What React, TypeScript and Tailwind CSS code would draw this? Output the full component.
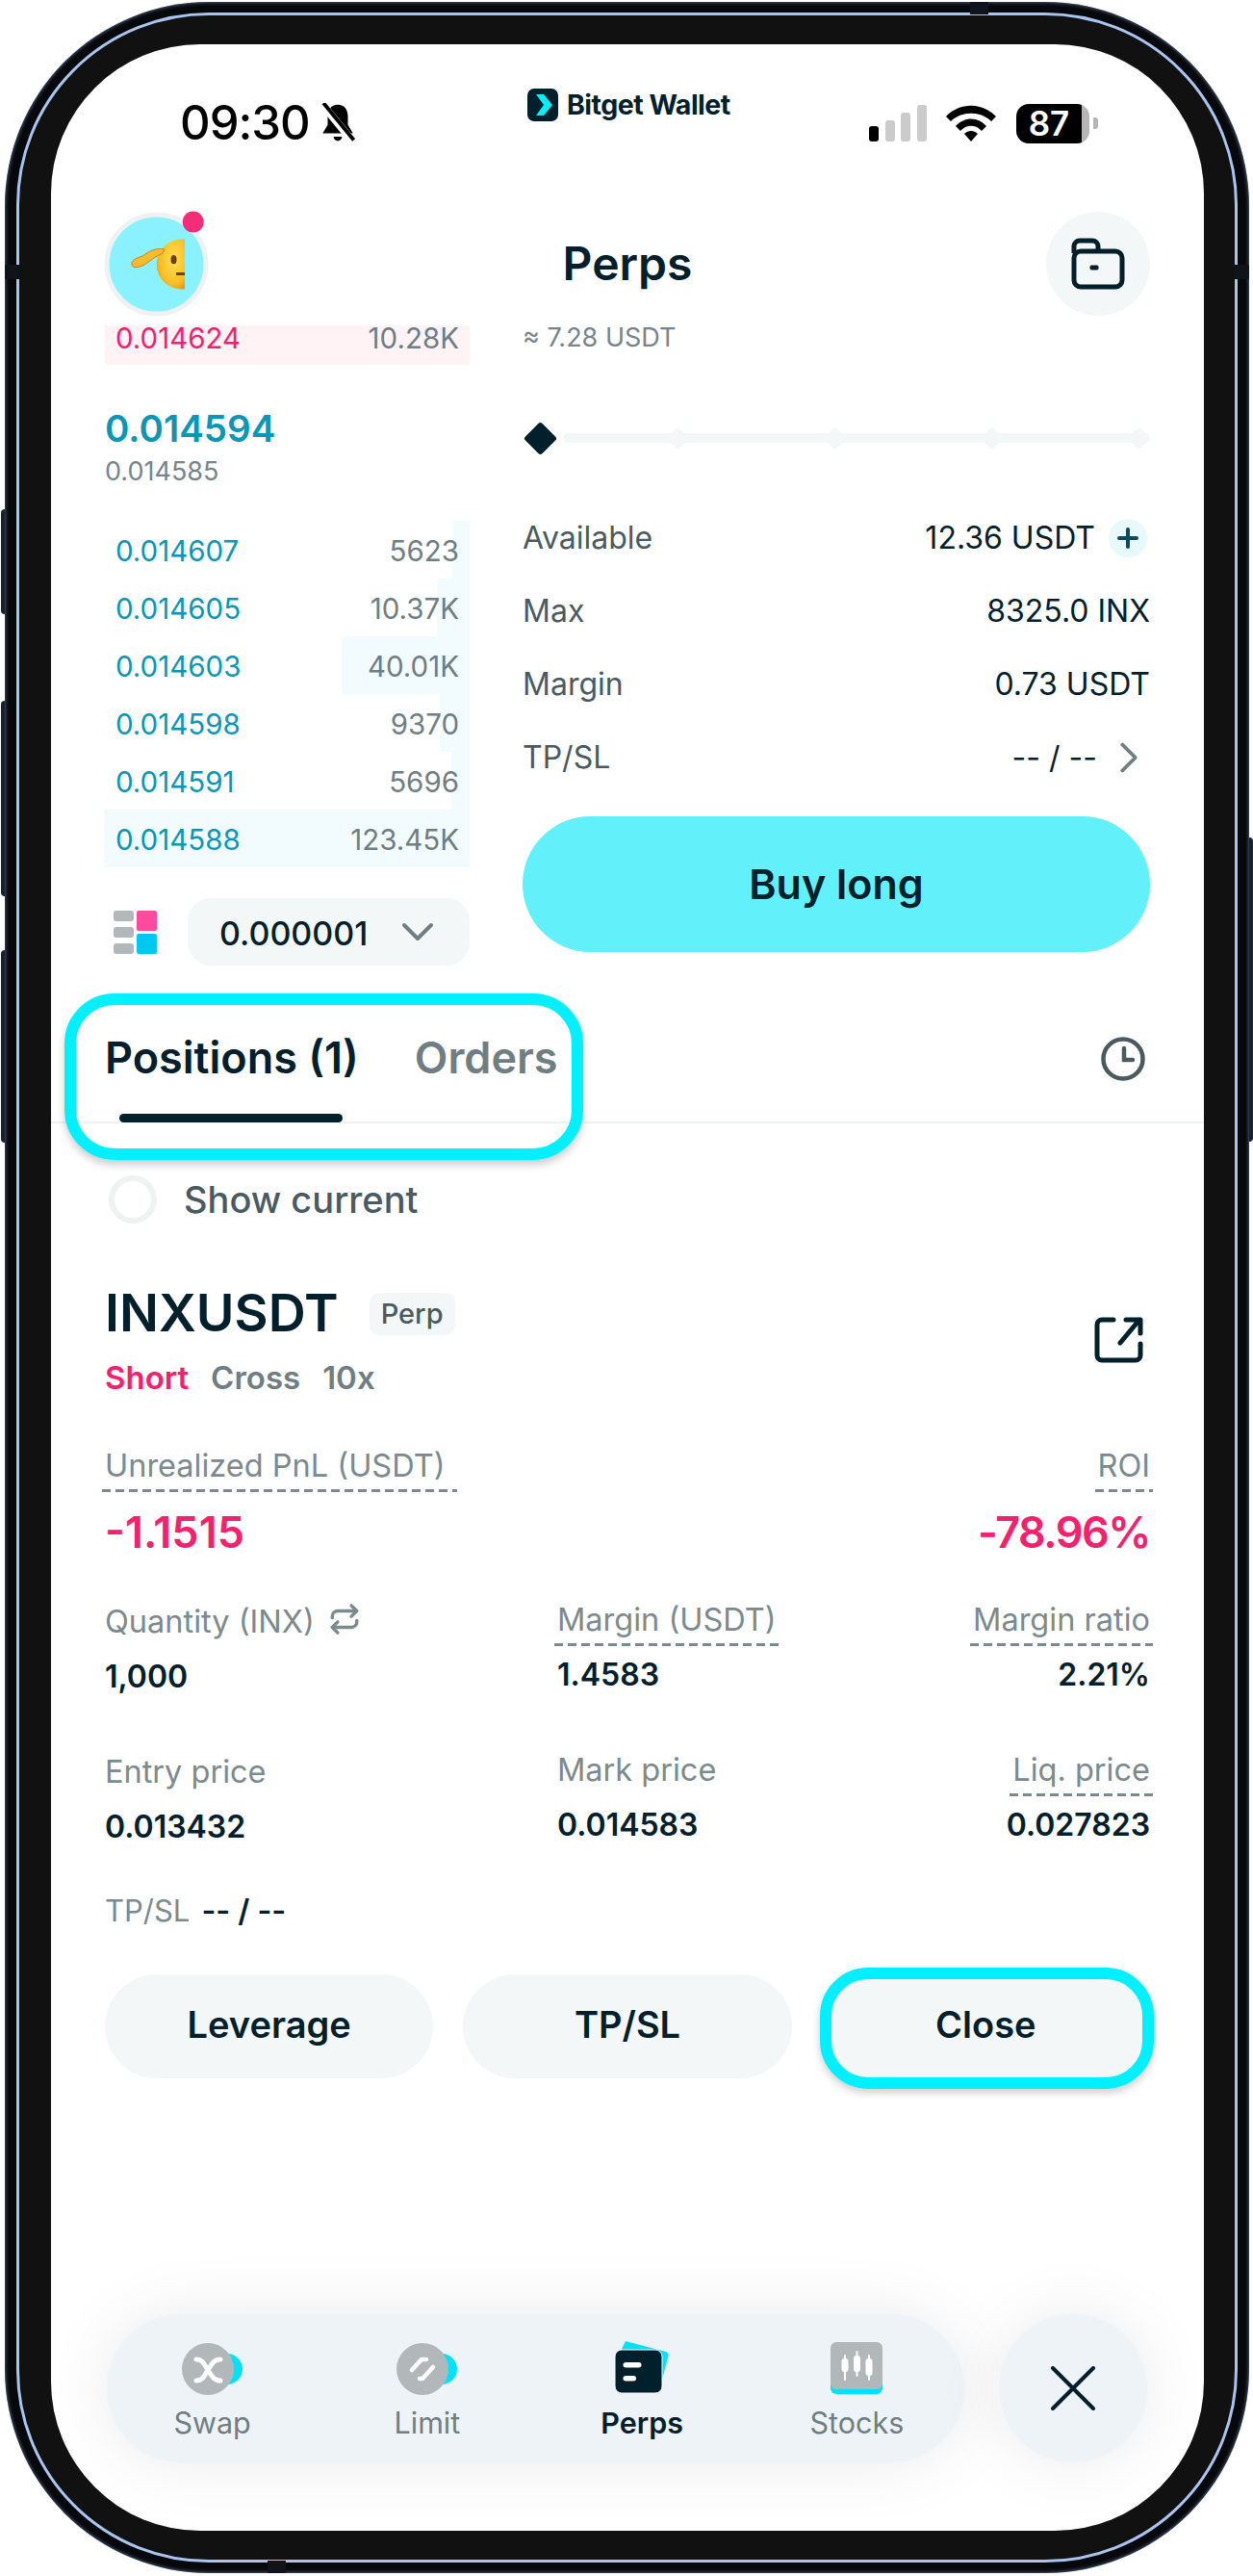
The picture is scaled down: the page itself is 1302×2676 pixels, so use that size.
import React from 'react';
import { ChevronDown, ChevronRight, Repeat } from 'lucide-react';

const asks = [
  { price: '0.014607', size: '5623', bar: 18 },
  { price: '0.014605', size: '10.37K', bar: 34 },
  { price: '0.014603', size: '40.01K', bar: 133 },
  { price: '0.014598', size: '9370', bar: 31 },
  { price: '0.014591', size: '5696', bar: 19 },
  { price: '0.014588', size: '123.45K', bar: 380 },
];

const Dash: React.FC = () => (
  <div className="-mx-[3px] mt-[4px] h-[3px] bg-[repeating-linear-gradient(90deg,#7c8a8e_0,#7c8a8e_9px,transparent_9px,transparent_14px)]" />
);

const Stat: React.FC<{ label: string; value: string; dashed?: boolean; right?: boolean; icon?: boolean; push?: boolean }> = ({
  label,
  value,
  dashed,
  right,
  icon,
  push,
}) => (
  <div className={`flex flex-col ${right ? 'items-end' : 'items-start'} ${push ? 'pt-[2px]' : ''}`}>
    <div className="inline-flex flex-col">
      <div className="flex items-center gap-[14px] text-[32.5px] leading-[40px] text-[#7c8a8e]">
        {label}
        {icon && <Repeat size={34} strokeWidth={2.4} className="-mt-[6px]" />}
      </div>
      {dashed ? <Dash /> : <div className="mt-[4px] h-[3px]" />}
    </div>
    <div className="mt-[10px] text-[32px] font-semibold leading-[40px] text-[#02202b]">{value}</div>
  </div>
);

const Avatar: React.FC = () => (
  <svg width="109" height="109" viewBox="8 9 109 109" className="overflow-visible">
    <defs>
      <radialGradient id="face" cx="0.6" cy="0.4" r="0.7">
        <stop offset="0" stopColor="#ffdf4f" />
        <stop offset="0.7" stopColor="#fbbf24" />
        <stop offset="1" stopColor="#ee8f10" />
      </radialGradient>
    </defs>
    <circle cx="62.5" cy="63.5" r="51.5" fill="#8af2ff" stroke="#f0f1f3" strokeWidth="5" />
    <path d="M92 37.7A26 26 0 1 0 92 89.3Z" fill="url(#face)" />
    <path
      d="M71 48C62 46 55 50 48 55C41 57 36 60 37 64C38 68 44 67 50 64C56 60 62 55 69 52Z"
      fill="#f7bb30"
      stroke="#cf8414"
      strokeWidth="1"
    />
    <ellipse cx="80.5" cy="58.7" rx="3" ry="4.6" fill="#6b3e0a" />
    <rect x="83" y="72" width="9" height="3" fill="#6b3e0a" />
    <circle cx="100.7" cy="19.5" r="11" fill="#f62d76" />
  </svg>
);

const SwapIcon: React.FC = () => (
  <svg width="64" height="58" viewBox="0 0 64 58">
    <circle cx="47" cy="29" r="16" fill="#00e0ff" />
    <circle cx="27" cy="29" r="27" fill="#b2b8ba" />
    <path
      d="M15 19C22 19 23 24 27 30C31 36 33 41 40 41M40 19C33 19 31 24 27 30C23 36 22 41 15 41"
      fill="none"
      stroke="#fff"
      strokeWidth="5"
      strokeLinecap="round"
    />
  </svg>
);

const LimitIcon: React.FC = () => (
  <svg width="64" height="58" viewBox="0 0 64 58">
    <circle cx="47" cy="29" r="16" fill="#00e0ff" />
    <circle cx="27" cy="29" r="27" fill="#b2b8ba" />
    <path d="M16 30L26 19H31M24 39H27L38 27" fill="none" stroke="#fff" strokeWidth="4.5" strokeLinecap="round" strokeLinejoin="round" />
  </svg>
);

const PerpsIcon: React.FC = () => (
  <svg width="58" height="56" viewBox="0 0 58 56">
    <path d="M12 0L54 11Q57 12 56.5 15L50 40L8 8Z" fill="#00e0ff" />
    <rect x="1" y="9" width="49" height="45" rx="7" fill="#02202b" stroke="#fff" strokeWidth="1" />
    <rect x="9.5" y="22" width="19" height="5.5" rx="2.7" fill="#fff" />
    <rect x="9.5" y="36" width="13.5" height="5.5" rx="2.7" fill="#fff" />
  </svg>
);

const StocksIcon: React.FC = () => (
  <svg width="54" height="55" viewBox="0 0 54 55">
    <rect x="0" y="26" width="54" height="29" rx="6" fill="#00e0ff" />
    <rect x="0" y="1" width="54" height="49" rx="6" fill="#b2b8ba" />
    <g fill="#fff">
      <rect x="11.5" y="18" width="7" height="14" rx="3" />
      <rect x="14" y="14" width="2" height="27" rx="1" />
      <rect x="24" y="15" width="7" height="17" rx="3" />
      <rect x="26.5" y="10" width="2" height="27" rx="1" />
      <rect x="36.5" y="18" width="7" height="18" rx="3" />
      <rect x="39" y="14" width="2" height="27" rx="1" />
    </g>
  </svg>
);

const App: React.FC = () => {
  return (
    <div className="relative h-[2676px] w-[1302px] bg-white [font-family:Inter,sans-serif]">
      {/* side buttons */}
      <div className="absolute left-[1px] top-[529px] h-[109px] w-[6px] rounded-l-[4px] bg-[#1a2230]" />
      <div className="absolute left-[1px] top-[728px] h-[203px] w-[6px] rounded-l-[4px] bg-[#1a2230]" />
      <div className="absolute left-[1px] top-[987px] h-[200px] w-[6px] rounded-l-[4px] bg-[#1a2230]" />
      <div className="absolute right-0 top-[870px] h-[316px] w-[6px] rounded-r-[4px] bg-[#1a2230]" />

      <div className="absolute left-[5px] top-[2px] h-[2671px] w-[1293px] rounded-[212px] bg-[#06080c] px-[12px] py-[11px] shadow-[inset_0_0_4px_rgba(150,180,225,0.7)]">
        <div className="h-full rounded-[200px] border-[3px] border-[#a9c4ee] bg-[#111111] pb-[30px] pl-[33px] pr-[32px] pt-[30px]">
          <div className="flex h-full flex-col overflow-hidden rounded-[155px] bg-white">
            {/* status bar */}
            <div className="flex h-[174px] shrink-0 pl-[134px] pr-[110px]">
              <div className="mt-[58px] flex h-[48px] w-[360px] items-center gap-[8px]">
                <span className="text-[49px] font-medium leading-[48px] tracking-[-1px] text-black">09:30</span>
                <svg width="42" height="42" viewBox="0 0 24 24">
                  <path d="M12 1C8 1 6 4 6 8V13L3 18H21L18 13V8C18 4 16 1 12 1Z" fill="#000" />
                  <path d="M9.5 20A2.5 2.5 0 0 0 14.5 20Z" fill="#000" />
                  <path d="M3 1L21 23" stroke="#fff" strokeWidth="4.5" />
                  <path d="M3.5 0L21.5 22" stroke="#000" strokeWidth="2.2" />
                </svg>
              </div>
              <div className="mt-[45px] flex h-[36px] items-center gap-[8px]">
                <svg width="34" height="34" viewBox="0 0 32 34">
                  <rect width="32" height="34" rx="7" fill="#02202b" />
                  <path d="M9 6H17L26 17L17 28H9L17 17Z" fill="#00f0ff" />
                </svg>
                <span className="text-[28.5px] font-bold tracking-[-0.5px] text-[#02202b]">Bitget Wallet</span>
              </div>
              <div className="ml-auto mt-[58px] flex h-[48px] items-center">
                <svg width="60" height="38" viewBox="0 0 60 38">
                  <rect x="0" y="22" width="10" height="16" rx="3" fill="#000" />
                  <rect x="17" y="16" width="10" height="22" rx="3" fill="#cbcbcb" />
                  <rect x="33" y="8" width="10" height="30" rx="3" fill="#cbcbcb" />
                  <rect x="50" y="0" width="10" height="38" rx="3" fill="#cbcbcb" />
                </svg>
                <svg width="52" height="38" viewBox="0 0 52 38" className="ml-[20px]">
                  <path d="M0 12C14 -3 38 -3 52 12L47 17C36 6 16 6 5 17Z" fill="#000" />
                  <path d="M10 22C19 12 33 12 42 22L37 27C31 20 21 20 15 27Z" fill="#000" />
                  <path d="M19 30C23 26 29 26 33 30L26 38Z" fill="#000" />
                </svg>
                <div className="ml-[21px] flex h-[41px] w-[76px] overflow-hidden rounded-[13px]">
                  <div className="flex w-[68px] items-center justify-center bg-black text-[35px] font-semibold leading-none text-white">87</div>
                  <div className="w-[8px] bg-[#b5b5b5]" />
                </div>
                <div className="ml-[4px] h-[12px] w-[5px] rounded-r-[3px] bg-[#b5b5b5]" />
              </div>
            </div>

            {/* header */}
            <div className="flex h-[108px] shrink-0 items-center justify-between pl-[55px] pr-[56px]">
              <Avatar />
              <span className="text-[48px] font-semibold text-[#02202b]">Perps</span>
              <div className="flex h-[108px] w-[108px] items-center justify-center rounded-full bg-[#f4f7f8]">
                <svg width="56" height="54" viewBox="0 0 56 54" fill="none" stroke="#02202b" strokeWidth="5">
                  <rect x="3" y="14" width="50" height="37" rx="7" />
                  <path d="M3 16V9A6 6 0 0 1 9 3H22A6 6 0 0 1 28 9V14" />
                  <rect x="20" y="29" width="8" height="4" rx="1" fill="#02202b" strokeWidth="1" />
                </svg>
              </div>
            </div>

            {/* order book and order form */}
            <div className="mt-[10px] flex h-[664px] shrink-0 gap-[55px] pl-[56px]">
              <div className="w-[379px] shrink-0">
                <div className="flex h-[41px] justify-between bg-[#fff3f6] px-[11px] text-[29.5px] leading-[26px]">
                  <span className="text-[#f5206e]">0.014624</span>
                  <span className="text-[#6f7e82]">10.28K</span>
                </div>
                <div className="mt-[44px] text-[38.5px] font-semibold leading-[44px] text-[#0a96b4]">0.014594</div>
                <div className="mt-[6px] text-[27px] leading-[34px] text-[#77848a]">0.014585</div>
                <div className="mt-[34px]">
                  {asks.map((row) => (
                    <div key={row.price} className="relative flex h-[60px] items-center justify-between px-[11px] pt-[3px] text-[29.5px]">
                      <div className="absolute bottom-0 right-0 top-0 bg-[#f2fbfe]" style={{ width: row.bar }} />
                      <span className="relative text-[#0a96b4]">{row.price}</span>
                      <span className="relative text-[#6f7e82]">{row.size}</span>
                    </div>
                  ))}
                </div>
                <div className="mt-[32px] flex h-[70px] items-center justify-between pl-[9px]">
                  <svg width="45" height="45" viewBox="0 0 45 45">
                    <rect x="0" y="0" width="21" height="11" rx="3" fill="#b2b8ba" />
                    <rect x="0" y="17" width="21" height="11" rx="3" fill="#b2b8ba" />
                    <rect x="0" y="34" width="21" height="11" rx="3" fill="#b2b8ba" />
                    <rect x="24" y="0" width="21" height="21" rx="2" fill="#ff4b9d" />
                    <rect x="24" y="24" width="21" height="21" rx="2" fill="#00c8f0" />
                  </svg>
                  <div className="flex h-[70px] w-[293px] items-center rounded-[24px] bg-[#f4f7f8] pl-[33px]">
                    <span className="pt-[3px] text-[34px] font-medium text-[#02202b]">0.000001</span>
                    <ChevronDown size={56} strokeWidth={1.7} className="ml-[24px] text-[#6f7e82]" />
                  </div>
                </div>
              </div>

              <div className="w-[652px] shrink-0">
                <div className="text-[27px] leading-[26px] text-[#77848a]">≈ 7.28 USDT</div>
                <div className="mt-[71px] flex h-[40px] items-center">
                  <div className="ml-[6px] mr-[11px] h-[25px] w-[25px] shrink-0 rotate-45 rounded-[3px] bg-[#02202b]" />
                  <div className="relative flex h-[24px] flex-1 items-center">
                    <div className="absolute inset-x-0 h-[10px] rounded-full bg-[#f3f7f8]" />
                    <div className="relative ml-[111px] flex items-center gap-[146px]">
                      <div className="h-[17px] w-[17px] shrink-0 rotate-45 rounded-[3px] bg-[#f3f7f8]" />
                      <div className="h-[17px] w-[17px] shrink-0 rotate-45 rounded-[3px] bg-[#f3f7f8]" />
                      <div className="h-[17px] w-[17px] shrink-0 rotate-45 rounded-[3px] bg-[#f3f7f8]" />
                      <div className="-ml-[10px] h-[17px] w-[17px] shrink-0 rotate-45 rounded-[3px] bg-[#f3f7f8]" />
                    </div>
                  </div>
                </div>
                <div className="mt-[64px] flex flex-col gap-[36px] text-[32px] leading-[40px]">
                  <div className="flex items-center justify-between text-[#02202b]">
                    <span className="text-[#4a5a5f]">Available</span>
                    <div className="flex items-center gap-[14px] pr-[3px]">
                      <span>12.36 USDT</span>
                      <div className="flex h-[40px] w-[40px] items-center justify-center rounded-full bg-[#e8f9fc]">
                        <svg width="22" height="22" viewBox="0 0 22 22" stroke="#0d4a5c" strokeWidth="4" strokeLinecap="round">
                          <path d="M11 2V20M2 11H20" />
                        </svg>
                      </div>
                    </div>
                  </div>
                  <div className="flex items-center justify-between text-[#02202b]">
                    <span className="text-[#4a5a5f]">Max</span>
                    <span>8325.0 INX</span>
                  </div>
                  <div className="flex items-center justify-between text-[#02202b]">
                    <span className="text-[#4a5a5f]">Margin</span>
                    <span>0.73 USDT</span>
                  </div>
                  <div className="flex items-center justify-between text-[#02202b]">
                    <span className="text-[#4a5a5f]">TP/SL</span>
                    <div className="flex h-[40px] items-center">
                      <span>-- / --</span>
                      <ChevronRight size={54} strokeWidth={1.7} className="-mr-[5px] ml-[6px] text-[#6f7e82]" />
                    </div>
                  </div>
                </div>
                <button className="mt-[41px] flex h-[141px] w-full items-center justify-center rounded-full bg-[#62f0fa] text-[43px] font-semibold text-[#02202b]">
                  Buy long
                </button>
              </div>
            </div>

            {/* tabs */}
            <div className="relative flex h-[165px] shrink-0 items-start justify-between border-b-2 border-[#eef2f3] pl-[56px] pr-[61px] pt-[69px]">
              <div className="flex gap-[58px] text-[45px] font-semibold leading-[56px]">
                <div className="flex flex-col">
                  <span className="text-[#02202b]">Positions (1)</span>
                  <div className="ml-[15px] mt-[30px] h-[9px] w-[232px] rounded-full bg-[#02202b]" />
                </div>
                <span className="text-[#6f7e82]">Orders</span>
              </div>
              <svg width="46" height="46" viewBox="0 0 46 46" fill="none" stroke="#4a5a5f" strokeWidth="4.5" className="mt-[6px]">
                <circle cx="23" cy="23" r="20.5" />
                <path d="M24 12V24H33" strokeLinecap="round" />
              </svg>
              <div className="absolute left-[14px] top-[30px] h-[173px] w-[539px] rounded-[52px] border-[12px] border-[#00f0ff] shadow-[0_5px_8px_rgba(0,0,0,0.2)]" />
            </div>

            {/* show current */}
            <div className="mt-[53px] flex h-[52px] shrink-0 items-center gap-[28px] pl-[60px]">
              <div className="h-[50px] w-[50px] rounded-full border-[6px] border-[#f0f1f1]" />
              <span className="text-[38px] font-medium text-[#4a5a5f]">Show current</span>
            </div>

            {/* position card */}
            <div className="shrink-0 px-[56px]">
              <div className="mt-[60px] flex items-center justify-between">
                <div>
                  <div className="flex h-[64px] items-center gap-[32px]">
                    <span className="text-[54px] font-semibold leading-[64px] text-[#02202b]">INXUSDT</span>
                    <span className="mt-[2px] rounded-[10px] bg-[#f4f7f8] px-[12px] py-[2px] text-[29px] font-medium leading-[40px] text-[#4a5a5f]">Perp</span>
                  </div>
                  <div className="mt-[15px] flex h-[40px] items-center gap-[23px] text-[33px] font-semibold leading-[40px] text-[#6f7e82]">
                    <span className="text-[#f5206e]">Short</span>
                    <span>Cross</span>
                    <span>10x</span>
                  </div>
                </div>
                <svg width="52" height="48" viewBox="0 0 52 48" fill="none" stroke="#02202b" strokeWidth="5" strokeLinecap="round" strokeLinejoin="round" className="mr-[6px]">
                  <path d="M20 3H8A5 5 0 0 0 3 8V40A5 5 0 0 0 8 45H43A5 5 0 0 0 48 40V28" />
                  <path d="M27 27L47 3M33 3H48V17" />
                </svg>
              </div>

              <div className="mt-[52px] flex items-start justify-between">
                <div>
                  <div className="inline-flex flex-col">
                    <div className="pr-[9px] text-[32.5px] leading-[40px] text-[#7c8a8e]">Unrealized PnL (USDT)</div>
                    <Dash />
                  </div>
                  <div className="mt-[16px] text-[45px] font-semibold leading-[52px] text-[#f5206e]">-1.1515</div>
                </div>
                <div className="flex flex-col items-end">
                  <div className="inline-flex flex-col">
                    <div className="text-[32.5px] leading-[40px] text-[#7c8a8e]">ROI</div>
                    <Dash />
                  </div>
                  <div className="mt-[16px] text-[45px] font-semibold leading-[52px] tracking-[-1.5px] text-[#f5206e]">-78.96%</div>
                </div>
              </div>

              <div className="mt-[45px] grid grid-cols-[470px_1fr_1fr] gap-y-[57px]">
                <Stat label="Quantity (INX)" value="1,000" icon push />
                <Stat label="Margin (USDT)" value="1.4583" dashed />
                <Stat label="Margin ratio" value="2.21%" dashed right />
                <Stat label="Entry price" value="0.013432" push />
                <Stat label="Mark price" value="0.014583" />
                <Stat label="Liq. price" value="0.027823" dashed right />
              </div>

              <div className="mt-[47px] flex h-[40px] items-center gap-[12px] leading-[40px]">
                <span className="text-[31px] text-[#7c8a8e]">TP/SL</span>
                <span className="text-[32px] font-semibold text-[#02202b]">-- / --</span>
              </div>

              <div className="mt-[46px] grid grid-cols-3 gap-[31px]">
                <button className="h-[108px] rounded-full bg-[#f4f7f8] pb-[3px] text-[38px] font-semibold text-[#02202b]">Leverage</button>
                <button className="h-[108px] rounded-full bg-[#f4f7f8] pb-[3px] text-[38px] font-semibold text-[#02202b]">TP/SL</button>
                <div className="relative">
                  <button className="h-[108px] w-full rounded-full bg-[#f4f7f8] pb-[3px] text-[38px] font-semibold text-[#02202b]">Close</button>
                  <div className="absolute -bottom-[11px] -left-[2px] -right-[4px] -top-[7px] rounded-[50px] border-[12px] border-[#00f0ff] shadow-[0_4px_8px_rgba(0,0,0,0.2)]" />
                </div>
              </div>
            </div>

            {/* bottom nav */}
            <div className="mt-[243px] flex shrink-0 gap-[32px] pl-[56px]">
              <div className="h-[158px] w-[895px] rounded-[79px] border-2 border-[#f4f7fa] bg-[#eef3f7] shadow-[0_0_70px_rgba(0,0,0,0.08)]">
                <div className="-ml-[2px] flex pt-[28px]">
                  <div className="flex w-[225px] flex-col items-center">
                    <div className="h-[58px]"><SwapIcon /></div>
                    <span className="mt-[8px] text-[30.5px] leading-[38px] text-[#6f7e82]">Swap</span>
                  </div>
                  <div className="flex w-[225px] flex-col items-center">
                    <div className="h-[58px]"><LimitIcon /></div>
                    <span className="mt-[8px] text-[30.5px] leading-[38px] text-[#6f7e82]">Limit</span>
                  </div>
                  <div className="flex w-[225px] flex-col items-center">
                    <div className="h-[58px]"><PerpsIcon /></div>
                    <span className="mt-[8px] text-[30.5px] font-semibold leading-[38px] text-[#02202b]">Perps</span>
                  </div>
                  <div className="flex w-[225px] flex-col items-center">
                    <div className="h-[58px]"><StocksIcon /></div>
                    <span className="mt-[8px] text-[30.5px] leading-[38px] text-[#6f7e82]">Stocks</span>
                  </div>
                </div>
              </div>
              <div className="flex h-[158px] w-[158px] items-center justify-center rounded-full border-2 border-[#f4f7fa] bg-[#eef3f7] shadow-[0_0_70px_rgba(0,0,0,0.08)]">
                <svg width="46" height="46" viewBox="0 0 46 46" stroke="#02202b" strokeWidth="4" strokeLinecap="round">
                  <path d="M2 2L44 44M44 2L2 44" />
                </svg>
              </div>
            </div>
          </div>
        </div>
      </div>

      {/* frame antenna bands */}
      <div className="absolute left-[1008px] top-[2px] h-[13px] w-[19px] bg-[#10141a]" />
      <div className="absolute left-[278px] top-[2660px] h-[13px] w-[19px] bg-[#10141a]" />
      <div className="absolute left-[5px] top-[275px] h-[15px] w-[15px] bg-[#10141a]" />
      <div className="absolute left-[1283px] top-[275px] h-[15px] w-[15px] bg-[#10141a]" />
    </div>
  );
};

export default App;
